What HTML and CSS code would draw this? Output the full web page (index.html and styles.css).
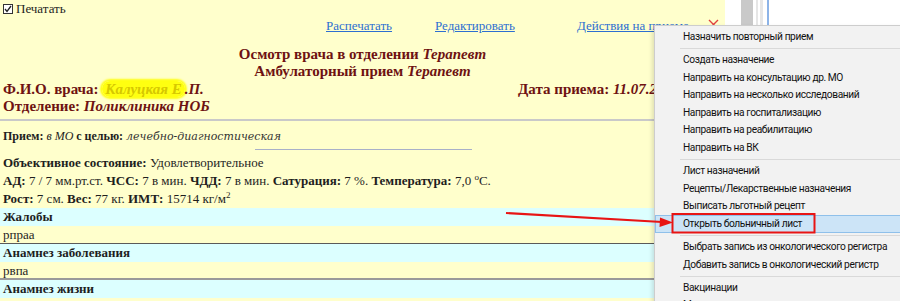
FILE: index.html
```html
<!doctype html>
<html lang="ru">
<head>
<meta charset="utf-8">
<title>Осмотр врача в отделении</title>
<link rel="stylesheet" href="styles.css">
</head>
<body>

<div id="divWrap">

	<div id="divPage">

		<label class="print">
			<span class="check"><svg width="8" height="8" viewBox="0 0 8 8"><path d="M1 4 L3 6.5 L7 1" fill="none" stroke="#222" stroke-width="1.3"/></svg></span>
			Печатать
		</label>

		<div class="links">
			<a href="#">Распечатать</a>
			<a href="#">Редактировать</a>
			<a href="#">Действия на приеме</a>
			<span class="close"><svg width="11" height="11" viewBox="0 0 11 11"><path d="M1 1 L10 10 M10 1 L1 10" stroke="#e04040" stroke-width="1.4"/></svg></span>
		</div>

		<div class="title">
			Осмотр врача в отделении <i>Терапевт</i><br>
			Амбулаторный прием <i>Терапевт</i>
		</div>

		<div class="doctor">
			<div class="fio">
				Ф.И.О. врача: <i><span class="blur">Калуцкая Е</span>.П.</i><br>
				Отделение: <i>Поликлиника НОБ</i>
			</div>
			<div class="date">Дата приема: <i>11.07.2023</i></div>
		</div>

		<hr class="line">

		<p class="visit"><b>Прием:</b> <i>в МО</i> <b>с целью:</b> <i class="goal">лечебно-диагностическая</i></p>

		<hr class="short">

		<div class="state">
			<p><b>Объективное состояние:</b> Удовлетворительное</p>
			<p><b>АД:</b> 7 / 7 мм.рт.ст. <b>ЧСС:</b> 7 в мин. <b>ЧДД:</b> 7 в мин. <b>Сатурация:</b> 7 %. <b>Температура:</b> 7,0 <sup>о</sup>С.</p>
			<p><b>Рост:</b> 7 см. <b>Вес:</b> 77 кг. <b>ИМТ:</b> 15714 кг/м<sup class="sq">2</sup></p>
		</div>

		<div class="rowHead">Жалобы</div>
		<div class="rowText dark">рпраа</div>
		<div class="rowHead">Анамнез заболевания</div>
		<div class="rowText grey">рвпа</div>
		<div class="rowHead">Анамнез жизни</div>

	</div>

	<div id="divSide"></div>

	<div id="divMenu">
		<div class="item">Назначить повторный прием</div>
		<div class="sep"></div>
		<div class="item">Создать назначение</div>
		<div class="item">Направить на консультацию др. МО</div>
		<div class="item">Направить на несколько исследований</div>
		<div class="item">Направить на госпитализацию</div>
		<div class="item">Направить на реабилитацию</div>
		<div class="item">Направить на ВК</div>
		<div class="sep"></div>
		<div class="item">Лист назначений</div>
		<div class="item">Рецепты/Лекарственные назначения</div>
		<div class="item">Выписать льготный рецепт</div>
		<div class="item active">Открыть больничный лист</div>
		<div class="sep"></div>
		<div class="item">Выбрать запись из онкологического регистра</div>
		<div class="item">Добавить запись в онкологический регистр</div>
		<div class="sep"></div>
		<div class="item">Вакцинации</div>
		<div class="item">Медицинские свидетельства</div>
	</div>

	<svg id="svgMarks" width="900" height="301" viewBox="0 0 900 301">
		<line x1="506" y1="213" x2="662" y2="222" stroke="#e81414" stroke-width="2.2"/>
		<polygon points="673,222.6 660,217.6 659.5,227" fill="#e81414"/>
		<rect x="672.5" y="214" width="142" height="18.5" fill="none" stroke="#e81414" stroke-width="2"/>
	</svg>

</div>

</body>
</html>
```

FILE: styles.css
```css
body { margin: 0; overflow: hidden; width: 900px; height: 301px; background: #fff; font: 13px "Liberation Serif", serif; color: #1e1e1e; }
p { margin: 0; }
sup { font-size: 9px; line-height: 0; vertical-align: 5px; }

#divWrap { display: flex; height: 301px; position: relative; overflow: hidden; }

#divPage { width: 725px; flex: none; background: #ffffcc; }

#divSide { flex: 1; background: linear-gradient( to right, #fff 0 16px, #c9c9c9 16px 28px, #fff 28px 31px, #e6e6e6 31px 33px, #fff 33px 35px, #e6e6e6 35px 38px, #fff 38px 42px, #8db4e8 42px 44px, #fff 44px ); }

.print { display: flex; align-items: center; gap: 3px; height: 17px; padding-left: 3px; }
.check { display: inline-flex; align-items: center; justify-content: center; width: 8px; height: 8px; border: 1px solid #333; background: #fff; }

.links { display: grid; grid-template-columns: 109px 142px 131px auto; padding-left: 326px; height: 17px; line-height: 17px; }
.links a { color: #2d6fd1; text-decoration: underline; justify-self: start; }
.close { display: flex; align-items: center; margin-top: -3px; }

.title { margin-top: 12px; text-align: center; font-weight: bold; font-size: 15px; line-height: 17px; color: #6e1212; }

.doctor { display: flex; font-weight: bold; font-size: 15px; line-height: 17px; color: #6e1212; margin-top: 1px; }
.fio { width: 515px; padding-left: 3px; }
.blur { background: #ffff10; color: #d6c800; border-radius: 9px; padding: 0 3px; box-shadow: 0 0 2px 2px #ffff10; }

.line { margin: 4px 0 0; border: none; height: 2px; background: #c9c9c9; }

.visit { padding-left: 3px; line-height: 18px; margin-top: 6px; font-size: 12px; }
.visit .goal { font-family: "DejaVu Serif", serif; font-size: 11px; color: #333; }

.short { margin: 3px 0 0 255px; width: 217px; border: none; height: 1px; background: #a8b0c8; }

.state { margin-top: 4px; padding-left: 3px; line-height: 18px; }

.rowHead { background: #dcffff; height: 18px; line-height: 18px; padding-left: 3px; font-weight: bold; }
.rowText { height: 17px; line-height: 17px; padding-left: 3px; }
.rowText.dark { border-bottom: 1px solid #5a5a5a; }
.rowText.grey { border-bottom: 2px solid #9a9a9a; height: 16px; }

#divMenu { position: absolute; left: 654px; top: 25px; width: 262px; bottom: -12px; padding-top: 2px; background: #f2f2f2; border: 1px solid #cdcdcd; box-shadow: -2px 2px 4px rgba( 0, 0, 0, 0.12 ); font: 10.2px Roboto, sans-serif; letter-spacing: -0.4px; color: #111; }
#divMenu .item { height: 17.6px; line-height: 17.6px; padding-left: 28px; white-space: nowrap; }
#divMenu .item.active { background: #cce4f7; box-shadow: inset 0 0 0 1px #8fc0ea; }
#divMenu .sep { height: 1px; background: #d9d9d9; margin: 2.5px 0 2px 25px; }

#svgMarks { position: absolute; left: 0; top: 0; pointer-events: none; }
```
